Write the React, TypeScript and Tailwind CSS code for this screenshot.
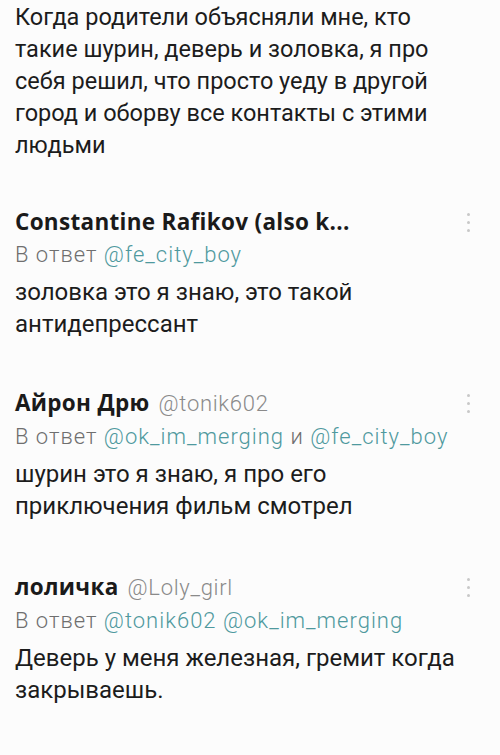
const body = 'font-[Roboto,sans-serif]';

function Dots() {
  return (
    <div className="flex flex-col items-center gap-[5px] pt-[6px]">
      <span className="h-[3px] w-[3px] rounded-full bg-[#c8c8c8]" />
      <span className="h-[3px] w-[3px] rounded-full bg-[#c8c8c8]" />
      <span className="h-[3px] w-[3px] rounded-full bg-[#c8c8c8]" />
    </div>
  );
}

interface ReplyProps {
  name: string;
  handle?: string;
  to: string[];
  joiner?: string;
  lines: string[];
}

function Reply({ name, handle, to, joiner, lines }: ReplyProps) {
  return (
    <div className="pr-[30px]">
      <div className="flex items-start justify-between">
        <div className="flex items-baseline gap-[9px] leading-[30px]">
          <span className="font-['Open_Sans',sans-serif] text-[22.5px] font-bold tracking-[0.3px] text-[#1a1a1a]">
            {name}
          </span>
          {handle && (
            <span className={`${body} text-[22px] font-light tracking-[0.7px] text-[#8a8a8a]`}>
              {handle}
            </span>
          )}
        </div>
        <Dots />
      </div>
      <p className={`${body} mt-[3px] text-[22px] font-light leading-[30px] tracking-[1px] text-[#6f6f6f]`}>
        В ответ{' '}
        {to.map((t, i) => (
          <span key={t}>
            {i > 0 && <span>{joiner ? ` ${joiner} ` : ' '}</span>}
            <span className="text-[#4f999e]">{t}</span>
          </span>
        ))}
      </p>
      <div className={`${body} mt-[6px] text-[24px] leading-[32px] text-[#1c1c1c]`}>
        {lines.map((l) => (
          <p key={l}>{l}</p>
        ))}
      </div>
    </div>
  );
}

export default function App() {
  return (
    <div className="h-[755px] w-[500px] overflow-hidden bg-[#fcfcfc] pl-[15px] pt-[1px]">
      <div className={`${body} text-[23.5px] leading-[32px] text-[#1c1c1c]`}>
        <p>Когда родители объясняли мне, кто</p>
        <p>такие шурин, деверь и золовка, я про</p>
        <p>себя решил, что просто уеду в другой</p>
        <p>город и оборву все контакты с этими</p>
        <p>людьми</p>
      </div>

      <div className="mt-[46px]">
        <Reply
          name="Constantine Rafikov (also k..."
          to={['@fe_city_boy']}
          lines={['золовка это я знаю, это такой', 'антидепрессант']}
        />
      </div>

      <div className="mt-[48px]">
        <Reply
          name="Айрон Дрю"
          handle="@tonik602"
          to={['@ok_im_merging', '@fe_city_boy']}
          joiner="и"
          lines={['шурин это я знаю, я про его', 'приключения фильм смотрел']}
        />
      </div>

      <div className="mt-[50px]">
        <Reply
          name="лоличка"
          handle="@Loly_girl"
          to={['@tonik602', '@ok_im_merging']}
          lines={['Деверь у меня железная, гремит когда', 'закрываешь.']}
        />
      </div>
    </div>
  );
}
